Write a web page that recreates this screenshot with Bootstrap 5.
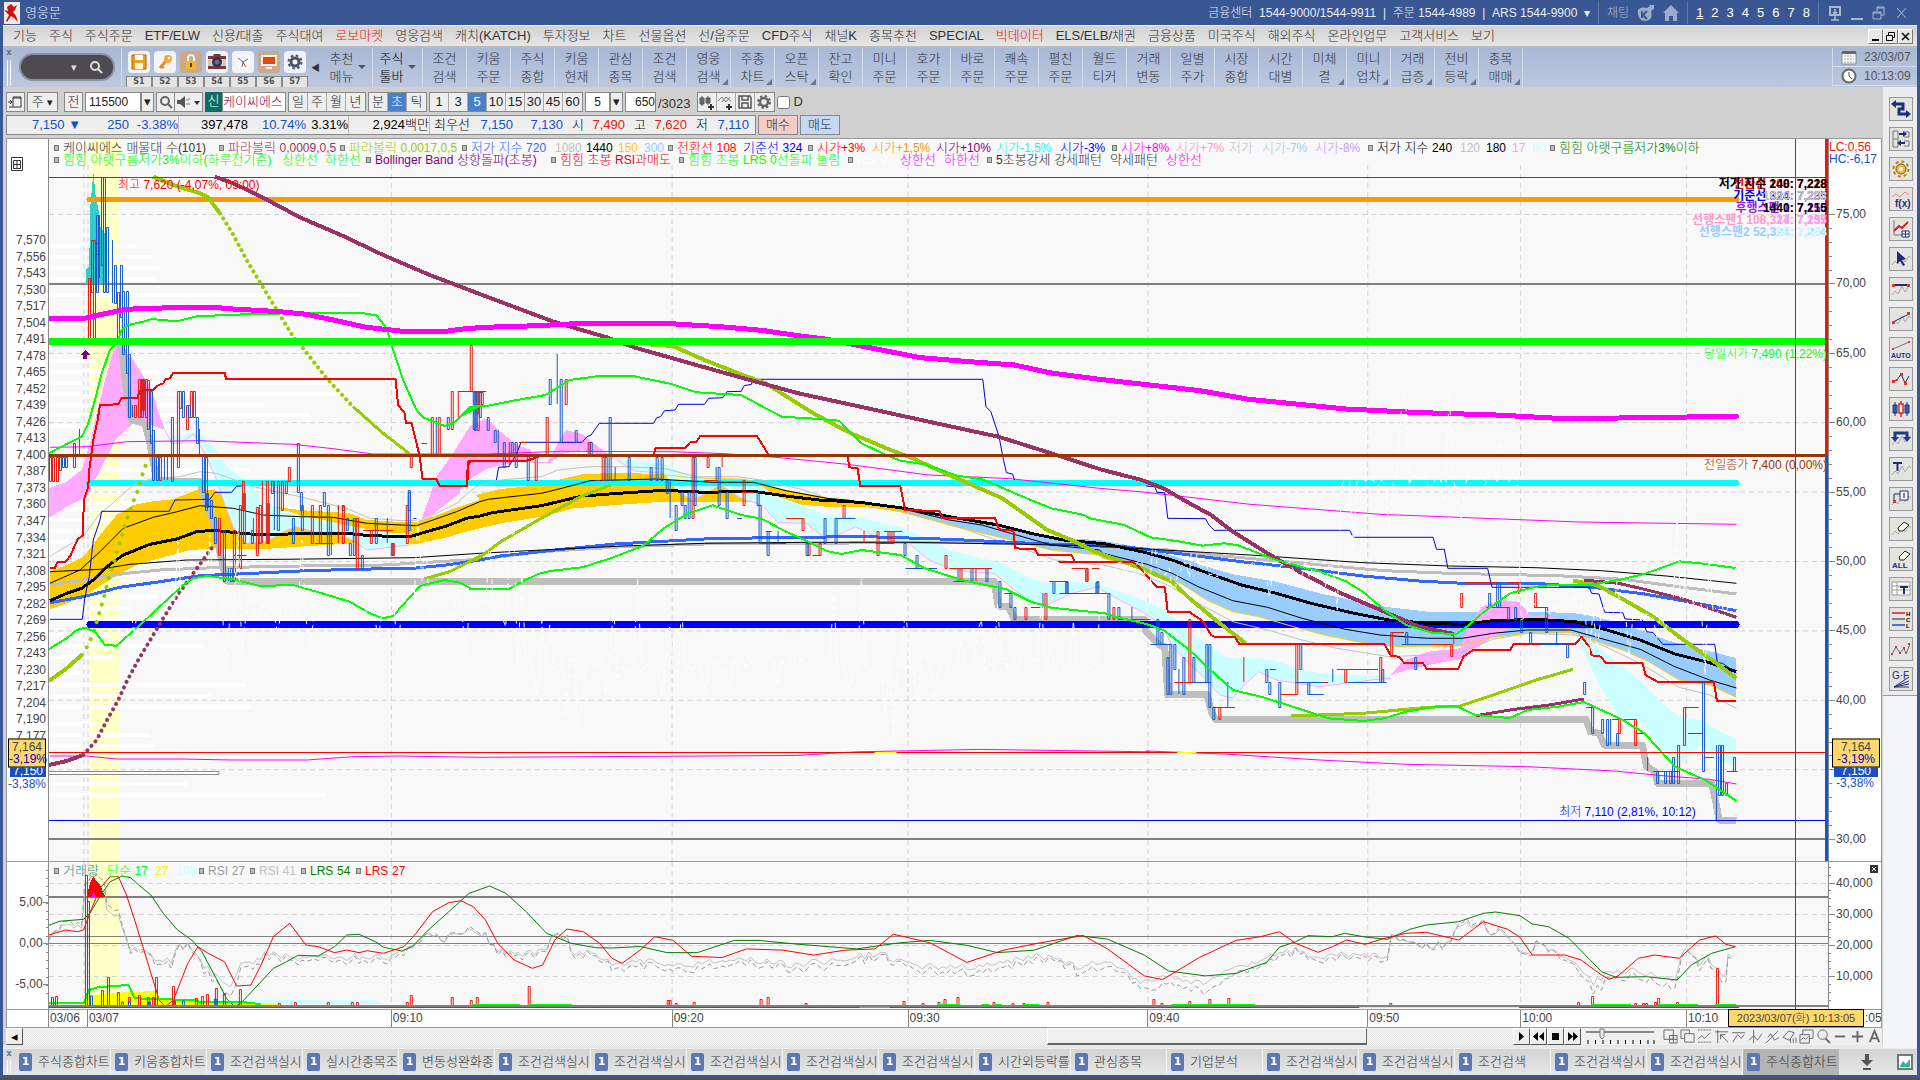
<!DOCTYPE html>
<html lang="ko">
<head>
<meta charset="utf-8">
<meta name="viewport" content="width=device-width, initial-scale=1">
<title>영웅문</title>
<link href="https://cdn.jsdelivr.net/npm/bootstrap@5.3.0/dist/css/bootstrap.min.css" rel="stylesheet">
<style>
:root{--ko:"Liberation Sans","Noto Sans CJK KR",sans-serif}
body{background:#3a5793;font:300 13px/16px var(--ko);color:#333;overflow:hidden}
button,input,select{font:inherit;color:inherit;border-radius:0;margin:0}
a{color:inherit;text-decoration:none}
svg{display:block;flex:none}
.shell{height:100vh;padding:0 3px 3px;border-bottom:2px solid #57513f}
.titlebar{height:25px;color:#e6ebf5;padding-left:1px}
.titlebar .sep{width:1px;height:23px;background:#5f78ab}
.phone{font-size:12px}
.dim{color:#a9b7d6}
.menubar{height:23px;background:linear-gradient(#d2d2d2,#e6e6e6);border-bottom:2px solid #bbb;border-top:1px solid #eee;gap:12px;padding-left:10px;font-size:13px}
.menubar a.hot{color:#e8180c}
.winbtn{width:15px;height:15px;padding:0;border:1px solid #777;border-top-color:#fff;border-left-color:#fff;background:#e8e8e4}
.ribbon{height:39px;background:linear-gradient(#a8b8d6,#bcc8de)}
.rcell{width:44px;border:0;border-right:1px solid #d4dcea;background:none;padding:0;line-height:18px;font-size:13px;position:relative;text-align:center}
.rcell.wide{width:50px;padding-right:12px}
.rcell.fold::after{content:"";position:absolute;right:2px;bottom:2px;border:3px solid transparent;border-right-color:#6a7283;border-bottom-color:#6a7283}
.rcell.wide::after{content:"";position:absolute;right:6px;top:17px;border:4px solid transparent;border-top-color:#555}
.finder{width:96px;height:28px;border-radius:14px;background:#4d4a50;border:2px solid #8a8f9c;color:#ddd;padding:0 10px 0 4px;margin:5px 6px 0 4px}
.finder input{width:46px;border:0;background:none;min-width:0}
.quickbar{border-left:1px solid #d4dcea;padding:3px 0 0 4px}
.quick{width:26px;text-align:center}
.quick button{width:22px;height:22px;border:0;border-radius:4px;padding:2px;background:#f2f3f5}
.quick button.tan{background:#cda98c}
.quick span{display:block;height:12px;font:bold 8px/9px "DejaVu Sans",sans-serif;border:1px solid #888;background:#e4e4e4;color:#555;margin-top:1px}
.fold-arrow{width:15px;font-size:9px;text-align:center}
.grip{width:12px}
.grip i{display:block;width:4px;height:26px;border:1px solid #fff;border-width:0 1px;margin:3px auto 0}
.grip em{display:block;font:bold 9px/9px var(--ko);color:#667;text-align:center}
.grip.low i{height:13px;margin-top:2px}
.stamp{width:85px;border-left:1px solid #d4dcea;color:#555;font-size:12px}
.stamp div{height:19px;border-bottom:1px solid #d4dcea;padding-left:8px;gap:7px}
.work{background:#d0d0d0;min-width:0;padding:5px 1px 0 3px;width:0}
.ctl{height:20px;gap:2px}
.bx{height:20px;border:1px solid #888;background:#eee;padding:0;text-align:center;color:#222}
.bx.w19{width:19px}
.grp{border:1px solid #888;height:20px}
.grp button{width:19px;border:0;border-right:1px solid #aaa;background:#eee;padding:0;color:#222}
.grp button:last-child{border-right:0}
.grp button.on{background:#4a80c8;color:#fff}
.bx.inp{background:#fff;text-align:left;padding-left:3px;font-size:12px}
.newtag{background:#0c6e62;color:#fff;width:17px;height:20px;text-align:center;line-height:18px}
.stk{width:64px;height:20px;line-height:17px;color:#8a0046;background:#fff;border:1px solid #888}
.quote{height:20px;margin-top:3px;gap:2px}
.qbox{width:750px;height:20px;border:1px solid #888;background:#eee;color:#000;text-align:right;line-height:18px}
.qbox .vs{border-right:1px solid #bbb}
.buy{width:40px;background:#f4cdc8}.sell{width:40px;background:#c3daf2}
.blu{color:#1450c8}.red{color:#e8180c}
.chartbox{display:grid;grid-template-columns:42px minmax(0,1fr) 53px;grid-template-rows:minmax(0,1fr) 148px 17px;border:1px solid #999;background:#fff;margin-top:3px;font-size:12px}
.axis,.plot{position:relative;min-width:0;min-height:0;border-bottom:1px solid #999}
.axis.l{border-right:1px solid #888}.axis.r{border-left:1px solid #888}
.plot{background:#f8f8f8}
.plot>svg{position:absolute;inset:0;width:100%;height:100%}
.axis span,.tm span,.pin{position:absolute;white-space:nowrap;line-height:14px}
.axis,.tm{color:#444}
.axis span{transform:translateY(-50%)}
.axis.l span{right:2px}.axis.r span{left:7px}
.axis i{position:absolute;height:1px;background:#888}
.axis.l i{right:0}.axis.r i{left:0}
.pin{transform:translateY(-50%)}
.lgd{position:absolute;left:5px;line-height:13px;white-space:nowrap;font-size:13px}
.lgd span{flex:none;white-space:pre}
.lgd em,.pin em{font-style:normal;font-size:12px}
.lgd .sq::before{content:"";display:inline-block;width:5px;height:6px;border:1px solid #777;background:#bbb;margin-right:4px;vertical-align:1px}
.lgd .first{border:1px solid #bbb;margin-top:-1px}
.axis .ybox{border:1px solid #000;background:#ffd86b;width:38px;text-align:center;line-height:12px;padding:1px 0 2px;z-index:2;right:4px}
.axis .ybox em{display:block;color:#00c;font-style:normal}
.axis.r .ybox{left:3px;width:48px}
.axis .bbox{background:#1450c8;color:#fff;width:36px;text-align:center;line-height:12px;right:4px}
.axis.r .bbox{left:5px;width:44px}
.tm{position:relative;min-width:0;background:#fff}
.tm span{border-left:1px solid #888;padding-left:1px;height:17px;line-height:16px}
.tm .datebox{background:#ffd86b;border:1px solid #000;height:18px;width:136px;text-align:center;top:-1px;padding:0;font-size:11px}
.scroller{height:17px;background:#efefef;flex:none}
.track{background:repeating-conic-gradient(#e4e4e4 0 25%,#f8f8f8 0 50%) 0 0/2px 2px}
.thumb{background:#efefef;border:1px solid #fff;border-right:1px solid #666;border-bottom:2px solid #666;width:320px;margin-right:146px}
.sq16{width:17px;height:17px;border:1px solid #fff;border-right-color:#555;border-bottom-color:#555;background:#eee;padding:0;line-height:12px;color:#000}
.sicon{gap:2px;padding-left:4px}
.ledge{height:3px;background:#e8e8e8;margin:0 -1px 0 -3px;flex:none}
.dock{width:34px;background:#f3f5f9}
.dock>div{background:#ececec;padding:10px 0 4px 6px;gap:6px;border-bottom:1px solid #999}
.dock button{width:24px;height:24px;border:1px solid #999;background:#e3e3e0;padding:1px}
.tabs{height:27px;background:linear-gradient(#d4d4d4,#e6e6e6);border-top:1px solid #eee}
.tabs a{width:96px;border-right:1px solid #f4f4f4;padding-left:4px;gap:6px;overflow:hidden;white-space:nowrap}
.tabs a.on{background:#b4b4b4;border:0}
.tabs b{width:13px;height:18px;border-radius:2px;background:#5a78b4;color:#fff;font:bold 11px/18px "DejaVu Sans",sans-serif;text-align:center;flex:none}
</style>
<script src="https://cdn.jsdelivr.net/npm/bootstrap@5.3.0/dist/js/bootstrap.bundle.min.js"></script>
</head>
<body>
<div class="shell d-flex flex-column">
 <header class="titlebar d-flex align-items-center">
  <svg width="17" height="24" viewBox="0 0 17 24"><path d="M0 1h16v22H0z" fill="#eceae6"/><path d="M7 3l3 3 3-2-2 5-2 2 3 4 2 6-4-4-3-2-4 6-1-1 3-6-3-3-2-2 4 1-1-4z" fill="#d01010"/></svg>
  <span class="ms-1">영웅문</span>
  <span class="ms-auto phone">금융센터&nbsp; 1544-9000/1544-9911 &nbsp;|&nbsp; 주문 1544-4989 &nbsp;|&nbsp; ARS 1544-9900 &nbsp;▾</span>
  <span class="sep mx-2"></span><span class="dim phone">채팅</span>
  <svg class="ms-2" width="18" height="18" viewBox="0 0 18 18"><path d="M1 6c2-3 6-3 9-2l3-2-1-1h5v5l-1-1-2 3c2 5-1 9-6 9S0 12 1 6z" fill="#9caccf"/><path d="M5 7v7M10 7l-4 4 4 4" stroke="#3a5793" stroke-width="2" fill="none"/></svg>
  <svg class="ms-2" width="16" height="18" viewBox="0 0 16 18"><path d="M8 1l8 8h-2v8h-4v-5H6v5H2V9H0z" fill="#9caccf"/></svg>
  <span class="sep mx-2"></span>
  <nav class="d-flex gap-2 text-white"><a href="#"><u>1</u></a><a href="#">2</a><a href="#">3</a><a href="#">4</a><a href="#">5</a><a href="#">6</a><a href="#">7</a><a href="#">8</a></nav>
  <span class="sep mx-2"></span>
  <svg width="90" height="18" viewBox="0 0 90 18" fill="none" stroke="#a9b7d6"><path d="M3 3h10v8H3z" stroke-width="2"/><path d="M8 5v5l-2-2m2 2l2-2M8 12v4M4 16h8" stroke-width="1.5"/><path d="M24 15h12" stroke-width="2"/><path d="M46 8h8v7h-8zM50 7V3h7v8h-3M46 9h8M50 4h7"/><path d="M70 4l9 10M79 4l-9 10"/></svg>
 </header>
 <nav class="menubar d-flex align-items-center" id="menu"></nav>
 <div class="ribbon d-flex">
  <div class="grip"><em>x</em><i></i></div>
  <div class="finder d-flex align-items-center"><input aria-label="화면 검색"><small>▾</small><svg class="ms-auto" width="14" height="14" viewBox="0 0 14 14" fill="none" stroke="#ddd" stroke-width="2"><circle cx="6" cy="6" r="4"/><path d="M9 9l4 4"/></svg></div>
  <div class="d-flex quickbar" id="quick"></div>
  <span class="fold-arrow align-self-center">◀</span>
  <div class="d-flex" id="ribbon"></div>
  <div class="stamp ms-auto">
   <div class="d-flex align-items-center"><svg width="16" height="16" viewBox="0 0 16 16"><path d="M1 3h14v12H1z" fill="#fff" stroke="#888"/><path d="M1 2h14v3H1z" fill="#666"/><path d="M3 7h10M3 10h10M3 13h10" stroke="#999" stroke-dasharray="2 1"/></svg>23/03/07</div>
   <div class="d-flex align-items-center"><svg width="16" height="16" viewBox="0 0 16 16"><circle cx="8" cy="8" r="6.5" fill="#fff" stroke="#666" stroke-width="2"/><path d="M8 4v4l3 3" fill="none" stroke="#555"/></svg>10:13:09</div>
  </div>
 </div>
 <div class="d-flex flex-grow-1" style="min-height:0">
  <main class="work d-flex flex-column flex-grow-1">
   <div class="ctl d-flex">
    <button class="bx w19" aria-label="패널"><svg width="17" height="18" viewBox="0 0 17 18" fill="none" stroke="#333"><path d="M6 4h8v10H6zM2 14h4M1 9h4M3 7l2 2-2 2M6 5h8"/></svg></button>
    <button class="bx" style="width:31px">주 <small>▾</small></button>
    <button class="bx w19 ms-1">전</button>
    <div class="d-flex"><input class="bx inp" style="width:56px" value="115500" aria-label="종목코드"><button class="bx" style="width:13px">▾</button></div>
    <button class="bx w19" aria-label="찾기"><svg width="17" height="18" viewBox="0 0 17 18" fill="none" stroke="#666" stroke-width="2"><circle cx="8" cy="8" r="4"/><path d="M11 11l4 4"/></svg></button>
    <button class="bx" style="width:29px;margin-left:-3px" aria-label="소리"><svg width="27" height="18" viewBox="0 0 27 18"><path d="M2 7h3l5-4v12l-5-4H2z" fill="#555"/><path d="M12 6v2M14 5v2M12 10v2M14 10v2" stroke="#777"/><path d="M19 8h6l-3 4z" fill="#333"/></svg></button>
    <div class="d-flex"><span class="newtag">신</span><span class="stk">케이씨에스</span></div>
    <div class="grp d-flex"><button>일</button><button>주</button><button>월</button><button>년</button></div>
    <div class="grp d-flex"><button>분</button><button class="on">초</button><button>틱</button></div>
    <div class="grp d-flex"><button>1</button><button>3</button><button class="on">5</button><button>10</button><button>15</button><button>30</button><button>45</button><button>60</button></div>
    <div class="d-flex"><input class="bx inp text-center p-0" style="width:25px" value="5" aria-label="주기"><button class="bx" style="width:13px">▾</button></div>
    <input class="bx inp text-end" style="width:31px" value="650" aria-label="봉 수"><span class="pt-1 me-1">/3023</span>
    <div class="grp d-flex"><button aria-label="봉 추가"><svg width="18" height="18" viewBox="0 0 18 18"><path d="M2 5h4v6H2zM4 3v10M8 5h4v5H8zM10 3v9" stroke="#555" fill="#777"/><path d="M13 11v6M10 14h6" stroke="#333" stroke-width="2"/></svg></button><button aria-label="지표 추가"><svg width="18" height="18" viewBox="0 0 18 18" fill="none" stroke="#777"><path d="M1 8l4-4 4 5 4-5M5 9l4-5 5 4"/><path d="M12 11v6M9 14h6" stroke="#333" stroke-width="2"/></svg></button><button aria-label="저장"><svg width="18" height="18" viewBox="0 0 18 18" fill="none" stroke="#555" stroke-width="1.5"><path d="M3 3h11l1 2v10H3zM6 3v4h6V3M6 15v-5h6v5"/></svg></button><button aria-label="설정"><svg width="18" height="18" viewBox="0 0 18 18" fill="none" stroke="#666"><circle cx="9" cy="9" r="4" stroke-width="2.5"/><circle cx="9" cy="9" r="6" stroke-width="2" stroke-dasharray="2.4 2.3"/></svg></button></div>
    <label class="d-flex align-items-center"><input type="checkbox" style="width:13px;height:13px" class="me-1">D</label>
   </div>
   <div class="quote d-flex">
    <div class="qbox d-flex" id="qbox"></div>
    <button class="bx buy">매수</button>
    <button class="bx sell">매도</button>
   </div>
   <section class="chartbox flex-grow-1">
    <div class="axis l" id="axL"></div>
    <div class="plot"><svg id="main" viewBox="49 139 1780 722" preserveAspectRatio="none" shape-rendering="crispEdges"></svg>
     <div class="lgd d-flex" id="lg1" style="top:2px"></div><div class="lgd d-flex" id="lg2" style="top:14px"></div><div id="pins"></div></div>
    <div class="axis r" id="axR"></div>
    <div class="axis l" id="axL2"></div>
    <div class="plot"><svg id="sub" viewBox="49 862 1780 147" preserveAspectRatio="none" shape-rendering="crispEdges"></svg><div class="lgd d-flex" id="lg3" style="top:2px"></div></div>
    <div class="axis r" id="axR2"></div>
    <div></div><div class="tm" id="tm"></div><div></div>
   </section>
   <div class="scroller d-flex">
    <button class="sq16">◂</button><div class="track flex-grow-1 d-flex justify-content-end"><div class="thumb"></div></div>
    <button class="sq16" aria-label="재생"><svg width="15" height="13" viewBox="0 0 15 13"><path d="M5 2v9l5-4.500z"/></svg></button><button class="sq16" aria-label="뒤로"><svg width="15" height="13" viewBox="0 0 15 13"><path d="M7 2v9L2 6.500zM13 2v9L8 6.500z"/></svg></button><button class="sq16" aria-label="정지"><svg width="15" height="13" viewBox="0 0 15 13"><path d="M4 3h7v7H4z"/></svg></button><button class="sq16" aria-label="앞으로"><svg width="15" height="13" viewBox="0 0 15 13"><path d="M3 2v9l5-4.500zM8 2v9l5-4.500z"/></svg></button>
    <svg class="ms-1" width="74" height="17" viewBox="0 0 74 17"><path d="M1 4h68" stroke="#888" stroke-width="2"/><path d="M3 12v4M10.500 12v4M18 12v4M25.500 12v4M33 12v4M40.500 12v4M48 12v4M55.500 12v4M63 12v4M69 12v4" stroke="#000"/><path d="M15 1h4v8l-2 2-2-2z" fill="#eee" stroke="#777"/></svg>
    <div class="d-flex sicon align-items-center" id="sicon"></div>
   </div>
   <div class="ledge"></div>
  </main>
  <aside class="dock"><div class="d-flex flex-column" id="dock"></div></aside>
 </div>
 <nav class="tabs d-flex" id="tabs"></nav>
</div>
<script>
const $=id=>document.getElementById(id);
const hot={'로보마켓':1,'빅데이터':1};
$('menu').innerHTML='기능 주식 주식주문 ETF/ELW 신용/대출 주식대여 로보마켓 영웅검색 캐치(KATCH) 투자정보 차트 선물옵션 선/옵주문 CFD주식 채널K 종목추천 SPECIAL 빅데이터 ELS/ELB/채권 금융상품 미국주식 해외주식 온라인업무 고객서비스 보기'.split(' ').map(t=>`<a href="#"${hot[t]?' class="hot"':''}>${t}</a>`).join('')+
 '<div class="ms-auto d-flex me-1"><button class="winbtn" aria-label="최소화"><svg width="13" height="13"><path d="M3 10h7" stroke="#000" stroke-width="2"/></svg></button><button class="winbtn" aria-label="복원"><svg width="13" height="13" fill="none" stroke="#000"><path d="M2.500 5.500h6v5h-6zM4.500 5V2.500h6v5H9"/></svg></button><button class="winbtn" aria-label="닫기"><svg width="13" height="13" stroke="#000" stroke-width="1.500"><path d="M3 3l7 7M10 3l-7 7"/></svg></button></div>';
const q=['<path d="M2 2h14v14H2z" fill="#e8a020" stroke="#a66a00"/><path d="M5 2h8v5H5z" fill="#fff"/><path d="M5 10h8v6H5z" fill="#fff3d0"/>',
'<path d="M4 15l6-7" stroke="#e8891c" stroke-width="3"/><circle cx="12" cy="6" r="4" fill="#f4a828"/><circle cx="13" cy="5" r="1.300" fill="#fff"/><path d="M5 13l3 2" stroke="#e8891c" stroke-width="2"/>',
'<path d="M6 8V5a3 3 0 016 0v3" fill="none" stroke="#eee" stroke-width="2"/><path d="M4 8h10v8H4z" fill="#f0b828"/><path d="M9 10v4" stroke="#444" stroke-width="2"/>',
'<path d="M0 3h5l1-2h6l1 2h5v13H0z" fill="#7a3a3a"/><path d="M0 6h18v7H0z" fill="#d8c8c0"/><circle cx="9" cy="9" r="5" fill="#334"/><circle cx="9" cy="9" r="2.500" fill="#66a"/>',
'<circle cx="9" cy="9" r="8" fill="#f6f8fa"/><path d="M4 5l5 4 5-3M9 9l-1 5" stroke="#667" fill="none"/><path d="M9 9l3 5" stroke="#c33"/>',
'<path d="M1 2h16v11H1z" fill="#eee"/><path d="M3 4h12v7H3z" fill="#e04818"/><path d="M6 15h6" stroke="#eee" stroke-width="2"/>',
'<circle cx="9" cy="9" r="4" fill="none" stroke="#4a5568" stroke-width="3"/><circle cx="9" cy="9" r="6.500" fill="none" stroke="#4a5568" stroke-width="2" stroke-dasharray="2.600 2.500"/>'];
$('quick').innerHTML=q.map((s,i)=>`<div class="quick"><button class="${i==2||i==5?'tan':''}" aria-label="S${i+1}"><svg width="18" height="18">${s}</svg></button><span>S${i+1}</span></div>`).join('');
$('ribbon').innerHTML='추천메뉴w 주식툴바w 조건검색 키움주문 주식종합 키움현재 관심종목 조건검색 영웅검색f 주종차트f 오픈스탁f 잔고확인 미니주문 호가주문 바로주문 쾌속주문 펼친주문 월드티커 거래변동 일별주가 시장종합 시간대별 미체결f 미니업차f 거래급증f 전비등락f 종목매매f'.split(' ').map((t,i)=>{
 const k=/[wf]$/.test(t)?t.slice(-1):'';if(k)t=t.slice(0,-1);
 return `<button class="rcell ${k=='w'?'wide':k=='f'?'fold':''} ${i==1?'text-black':''}">${t.slice(0,2)}<br>${t.slice(2)}</button>`}).join('');
$('qbox').innerHTML=[[74,'7,150 ▼','blu'],[48,'250','blu'],[50,'-3.38% ','blu vs'],[69,'397,478'],[58,'10.74%','blu'],[43,'3.31%','vs'],[81,'2,924백만','vs'],[40,'최우선'],[43,'7,150','blu'],[50,'7,130','blu'],[21,'시'],[41,'7,490','red'],[21,'고'],[41,'7,620','red'],[21,'저'],[41,'7,110','blu']].map(a=>`<span class="${a[2]||''}" style="width:${a[0]}px">${a[1]}</span>`).join('');
const wave='<path d="M1 16l3-4 3 3 4-8 3 6 4-6 2 2" fill="none" stroke="#aaa"/>';
const dk=['<path d="M2 5h10v5H8v5h10" fill="none" stroke="#1c2e78" stroke-width="3"/><path d="M5 1v8L0 5zM15 11v8l5-4z" fill="#1c2e78"/>',
'<path d="M2 2h5v16H2zM2 10h5M13 3h5v5h-5M13 12h5v5h-5" fill="none" stroke="#777"/><path d="M8 5h6M14 14H8" stroke="#1c2e78" stroke-width="2"/><path d="M12 2l4 3-4 3zM10 11l-4 3 4 3z" fill="#1c2e78"/>',
'<circle cx="10" cy="10" r="5" fill="#f4b840" stroke="#7a5410"/><circle cx="10" cy="10" r="7.500" fill="none" stroke="#b8801c" stroke-width="2" stroke-dasharray="3 2.900"/><circle cx="10" cy="10" r="2" fill="#fff"/>',
'<path d="M1 8l4-3 4 3 5-5 4 3" fill="none" stroke="#d88"/><text x="4" y="18" font-size="10" font-weight="bold" fill="#1c2e78">f(x)</text>',
'<path d="M3 1v15h14" fill="none" stroke="#777"/><path d="M3 12l5-5 3 2 6-6" fill="none" stroke="#c22" stroke-width="2"/><path d="M11 12h7v6h-7zM14.500 12v6M11 15h7" fill="#fff" stroke="#1c2e78"/>',
wave+'<path d="M6 2l9 8-4 1 3 5-2 1-3-5-3 3z" fill="#1c2e78"/>',
wave+'<path d="M2 6h16" stroke="#1c2e78" stroke-width="2"/><path d="M1 5h3v3H1zM16 5h3v3h-3z" fill="#d33"/>',
wave+'<path d="M2 13L18 5" stroke="#1c2e78"/><path d="M1 12h3v3H1zM16 3h3v3h-3z" fill="#d33"/>',
'<path d="M2 10L18 3" stroke="#777"/><path d="M1 9h2v2H1zM17 2h2v2h-2z" fill="#d33"/><text x="0" y="19" font-size="7" font-weight="bold" fill="#1c2e78">AUTO</text>',
'<path d="M2 12l4-1 4-6 4 9 4-7" fill="none" stroke="#1c2e78"/><path d="M1 11h3v3H1zM5 10h2v2H5zM9 4h3v3H9zM13 13h3v3h-3z" fill="#d33"/>',
'<path d="M2 6h4v8H2zM4 3v14M14 6h4v8h-4zM16 3v14" fill="#5a78c0" stroke="#1c2e78"/><path d="M8 5h4v9H8zM10 2v3M10 14v4" fill="#fff" stroke="#d22" stroke-width="1.500"/>',
wave+'<path d="M4 10V4h12v6" fill="none" stroke="#1c3c88" stroke-width="3"/><path d="M0 8h8l-4 5zM12 8h8l-4 5z" fill="#1c3c88"/>',
wave+'<path d="M2 3h9v2H2zM5.500 3h2v9h-2z" fill="#1c2e78"/>',
wave+'<path d="M3 12V5h6" fill="none" stroke="#1c2e78"/><path d="M9 2h8v9H9z" fill="#fff" stroke="#1c2e78"/><path d="M13 4v5" stroke="#000"/><path d="M2 11h3v3H2z" fill="#d33"/>',
wave+'<path d="M7 9l6-6 5 3-6 6H8z" fill="#fdf8ea" stroke="#222"/>',
'<path d="M8 8l6-6 5 3-6 6H9z" fill="#fdf8ea" stroke="#222"/><text x="1" y="19" font-size="8" font-weight="bold" fill="#1c2e78">ALL</text>',
'<path d="M1 3h18v13H1zM1 7h18M1 11h18M6 3v13" fill="#fff" stroke="#999"/><path d="M9 7h8v2H9zM12 7h2v8h-2z" fill="#1c2e78"/>',
'<path d="M1 4h13" stroke="#c22" stroke-width="1.500"/><path d="M1 10h13" stroke="#222"/><path d="M1 16h13" stroke="#15c" stroke-width="1.500"/><text x="15" y="7" font-size="6" font-weight="bold">H</text><text x="15" y="13" font-size="6" font-weight="bold">C</text><text x="15" y="19" font-size="6" font-weight="bold">L</text>',
'<path d="M1 15l4-7 4 6 4-5 2 6 4-10" fill="none" stroke="#668"/><path d="M0 14h2v2H0zM4 7h2v2H4zM8 13h2v2H8zM12 8h2v2h-2zM17 4h2v2h-2z" fill="#d33"/>',
'<text x="1" y="10" font-size="10" fill="#1c2e78">G·F</text><path d="M3 18L18 8M3 18L18 12M3 18h15M3 18L18 15" stroke="#1c2e78"/>'];
$('dock').innerHTML=dk.map((s,i)=>`<button aria-label="그리기 도구 ${i+1}"><svg width="20" height="20">${s}</svg></button>`).join('');
const si=['<path d="M1 1h10v10H1z"/><path d="M7 7h8v8H7zM11 7v8M7 11h8"/>','<path d="M1 1h9v9H1z"/><path d="M5 5h10v9H5z" fill="#eee"/>','<path d="M1 1h14M1 14h14" stroke-dasharray="2 1"/><path d="M1 11l4-4 3 3 6-6"/>','<path d="M1 3h14M4 1v14M7 6l8 8M7 6v5M7 6h5"/>','<path d="M1 4h14M2 14l5-8 4 4 3-4"/>','<path d="M6 1v14M1 12l5-5 4 5 5-7"/>','<path d="M1 15L14 2M3 9l3-4 4 7 5-3"/>','<path d="M1 9l6-7 6 2-5 8z"/><path d="M9 10v5M12 10v5M15 9v6"/>','<path d="M4 1h11v9H4z"/><path d="M1 6h10v9H1z" fill="#eee"/><path d="M2 12l3-3 2 2 3-3"/>','<circle cx="7" cy="6" r="5"/><path d="M10 10l5 5" stroke-width="2"/>','<path d="M2 8h11" stroke-width="2"/>','<path d="M2 8h12M8 2v12" stroke-width="2"/>','<path d="M3 14L8 2l5 12M5 10h6" stroke-width="2"/>'];
$('sicon').innerHTML=si.map(s=>`<svg width="15" height="15" viewBox="0 0 16 16" fill="none" stroke="#666">${s}</svg>`).join('');
$('tabs').innerHTML='<div class="grip low"><em>x</em><i></i></div>'+'주식종합차트 키움종합차트 조건검색실시 실시간종목조 변동성완화종 조건검색실시 조건검색실시 조건검색실시 조건검색실시 조건검색실시 시간외등락률 관심종목 기업분석 조건검색실시 조건검색실시 조건검색 조건검색실시 조건검색실시 주식종합차트'.split(' ').map((t,i)=>`<a href="#" class="d-flex align-items-center ${i==18?'on':''}"><b>1</b>${t}</a>`).join('')+
'<svg class="ms-auto me-4 align-self-center" width="12" height="18"><path d="M4 1h4v6h4l-6 6-6-6h4zM2 15h8v2H2z" fill="#555"/></svg><svg class="me-1 align-self-center" width="16" height="16"><path d="M1 1h14v14H1z" fill="#fff" stroke="#777" stroke-width="2"/><path d="M3 12l3-5 3 3 4-5v8H3z" fill="#2cb5a4"/></svg>';

/* axes */
const py=(y,t,h)=>((y-t)/h*100).toFixed(2)+'%', px=x=>((x-49)/1780*100).toFixed(2)+'%';
const lab=(y,t,h,s)=>`<span style="top:${py(y,t,h)}">${s}</span>`;
let h='<svg class="ms-1" style="position:absolute;left:0;top:18px" width="12" height="14"><path d="M.5.5h11v13H.5zM2.500 3.500h7v8h-7zM2.500 7.500h7M6 3.500v8" fill="#fff" stroke="#333"/></svg>';
[7570,7556,7543,7530,7517,7504,7491,7478,7465,7452,7439,7426,7413,7400,7387,7373,7360,7347,7334,7321,7308,7295,7282,7269,7256,7243,7230,7217,7204,7190,7177].forEach((v,i)=>h+=lab(240+i*16.53,139,722,'7,'+(v-7000)));
h+=`<span class="blu" style="top:${py(784,139,722)}">-3,38%</span>`;
h+=`<span class="bbox" style="top:${py(771,139,722)}">7,150</span><span class="ybox" style="top:${py(753,139,722)}">7,164<em>-3,19%</em></span>`;
$('axL').innerHTML=h;
h='<span class="red" style="top:8px;left:0">LC:0,56</span><span class="blu" style="top:20px;left:0">HC:-6,17</span>';
for(let i=0;i<10;i++){h+=lab(214+i*69.4,139,722,(75-i*5)+',00');for(let k=0;k<5&&i*5+k<46;k++)h+=`<i style="top:${py(214+i*69.4+k*13.9,139,722)};width:${k?3:6}px"></i>`}
h+=`<span class="bbox" style="top:${py(771,139,722)}">7,150</span><span class="blu" style="top:${py(783,139,722)}">-3,38%</span><span class="ybox" style="top:${py(753,139,722)}">7,164<em>-3,19%</em></span>`;
$('axR').innerHTML=h;
h='';[[902,'5,00'],[943,'0,00'],[984,'-5,00']].forEach(a=>h+=lab(a[0],862,147,a[1]+'&nbsp;')+`<i style="top:${py(a[0],862,147)};width:5px"></i>`);
for(let y=870;y<1000;y+=8.2)h+=`<i style="top:${py(y,862,147)};width:2px"></i>`;
$('axL2').innerHTML=h;
h='<svg style="position:absolute;right:3px;top:3px" width="8" height="8"><path d="M0 0h8v8H0z" fill="#333"/><path d="M2 2l4 4M6 2L2 6" stroke="#fff"/></svg>';
[[883,'40,000'],[914,'30,000'],[945,'20,000'],[976,'10,000']].forEach(a=>h+=lab(a[0],862,147,a[1])+`<i style="top:${py(a[0],862,147)};width:6px"></i>`);
for(let y=867;y<1005;y+=7.8)h+=`<i style="top:${py(y,862,147)};width:2px"></i>`;
$('axR2').innerHTML=h;
$('tm').innerHTML=[[48,'<b>03/06</b>'],[87,'<b>03/07</b>'],[391,'09:10'],[672,'09:20'],[908,'09:30'],[1148,'09:40'],[1368,'09:50'],[1521,'10:00'],[1687,'10:10']].map(a=>`<span style="left:${px(a[0])}">${a[1]}</span>`).join('')+`<span class="border-0" style="left:${px(1865)}">:05</span><span class="datebox" style="left:${px(1729)}">2023/03/07(화) 10:13:05</span>`;

/* legends: [advance, colour, text, starts a series] */
const lat=s=>s.replace(/[A-Za-z0-9,.+%()\-]+/g,'<em>$&</em>');
const lg=(id,a)=>$(id).innerHTML=a.map(r=>`<span class="${r[3]?'sq':''}" style="width:${r[0]}px;color:${r[1]}">${lat(r[2])}</span>`).join('');
lg('lg1',[[165,'#333','케이씨에스 매물대 수(101)',1],[121,'#993366','파라볼릭 0,0009,0,5',1],[122,'#99cc00','파라볼릭 0,0017,0,5',1],[93,'#3366ff','저가 지수 720',1],[31,'#c0c0c0','1080'],[32,'#000','1440'],[26,'#ffcc00','150'],[24,'#99ccff','300'],[75,'#f00','전환선 108',1],[65,'#00f','기준선 324'],[64,'#f00','시가+3%',1],[64,'#ff9900','시가+1,5%'],[60,'#800080','시가+10%'],[64,'#0ff','시가-1,5%'],[52,'#00f','시가-3%'],[64,'#f0f','시가+8%',1],[53,'#f9c','시가+7%'],[33,'#c0c0c0','저가'],[53,'#99ccff','시가-7%'],[53,'#c9f','시가-8%'],[92,'#000','저가 지수 240',1],[26,'#c0c0c0','120'],[26,'#000','180'],[20,'#f9f','17'],[18,'#cff','60'],[160,'green','힘힘 아랫구름저가3%이하',1]]);
lg('lg2',[[228,'#0f0','힘힘 아랫구름저가3%이하(하루전기준)',1],[43,'#0f0','상한선'],[41,'#0f0','하한선'],[185,'#800080','Bollinger Band 상향돌파(초봉)',1],[128,'#d8001c','힘힘 초봉 RSI과매도',1],[169,'#0f0','힘힘 초봉 LRS 0선돌파 눌림',1],[52,'#fff','RSI 27',1],[44,'#f0f','상한선'],[43,'#f0f','하한선'],[123,'#333','5초봉강세 강세패턴',1],[56,'#333','약세패턴'],[50,'#f0f','상한선']]);
lg('lg3',[[53,'#2a8c8c','거래량',1],[48,'#0f0','단순 17'],[21,'#ffec00','27'],[23,'#cff','108'],[51,'#999','RSI 27',1],[51,'#c0c0c0','RSI 41',1],[55,'green','LRS 54',1],[60,'#f00','LRS 27',1]]);
const pin=(x,y,c,s,b)=>`<span class="pin ${b?'fw-bold':''}" style="${x>1600?'right:1px':'left:'+px(x)};top:${py(y,139,722)};color:${c}">${s}</span>`;
$('pins').innerHTML=pin(118,185,'#f00','최고 7,620 (-4,07%, 09:00)')+pin(1560,812,'#00f','최저 7,110 (2,81%, 10:12)')+pin(1700,354,'#0f0','당일시가 7,490 (1,22%)')+pin(1700,465,'#993300','전일종가 7,400 (0,00%)')+
pin(1700,184,'#f00','전환선 108: 7,218',1)+pin(1700,184,'#000','저가 지수 240: 7,228',1)+pin(1700,196,'#00f','기준선 324: 7,235',1)+pin(1700,196,'#c0c0c0','1080: 7,298',1)+pin(1700,208,'#9c1be0','후행스팬 1: 7,150',1)+pin(1700,208,'#000','1440: 7,215',1)+pin(1700,220,'#f9c','선행스팬1 108,324: 7,237',1)+pin(1700,220,'#f9f','17: 7,155',1)+pin(1700,232,'#9cf','선행스팬2 52,324: 7,264',1)+pin(1700,232,'#cff','60: 7,163',1);

/* drawing helpers; each block of points has its own origin and scale */
const Z={A:[0,160,3,3],B:[0,500,3,3],C:[460,250,2.45,3],D:[1060,450,2.306,3],E:[0,0,.8167,.8167],F:[0,850,2.45,3],G:[1280,850,2.45,3],H:[640,980,2.45,3],P:[0,0,1,1]};
function pts(s){let z=Z.P,o=[];s.trim().split(/\s+/).forEach(t=>{if(Z[t]){z=Z[t];return}const[x,y]=t.split(',').map(Number);o.push([z[0]+x/z[2],z[1]+y/z[3]])});return o}
const f=o=>o.map(p=>p[0].toFixed(1)+','+p[1].toFixed(1)).join(' ');
const line=(c,w,s,x='')=>`<polyline points="${f(pts(s))}" fill="none" stroke="${c}" stroke-width="${w}" stroke-linejoin="round" ${x}/>`;
const area=(c,s)=>`<polygon points="${f(pts(s))}" fill="${c}"/>`;
const H=(y,c,w,x1=49,x2=1829,x='')=>`<path d="M${x1} ${y}H${x2}" stroke="${c}" stroke-width="${w}" ${x}/>`;
const dash='stroke-dasharray="5 4"', rnd='stroke-linecap="round"', dots='stroke-linecap="round" stroke-dasharray="0.100 6" shape-rendering="auto"';
const VX=[84,88,391.5,672.5,908.5,1148.5,1368.5,1521.5,1687.5];
let m='<path d="M89 139h30v722H89z" fill="#ffffc8"/>';
const prof=[136,152,160,156,360,81,95,180,330,351,264,310,190,250,143,220,300,150,210,380,240,180,158,129,190,110,204,113,85,246,210,251,96,149,155];
let pyv=[245.6,256.6,267.5,278.5,295,333,361,372,383,394,405,415,426,470,492,503,509,520,531,542,553,575,597,608,619,635,646,657,673,685,696,707,724,735,746];
pyv.forEach((y,i)=>m+=`<path d="M49 ${y-2}h${prof[i]-49}v4H49z" fill="#fff"/>`);
m+='<path d="M49 782h137v4H49zM49 793h276v4H49z" fill="#fff"/>';
VX.forEach(x=>m+=`<path d="M${x} 165V861" stroke="#d2d2d2" ${dash}/>`);
for(let i=0;i<10;i++)if(i!=1&&i!=9)m+=H(214.5+i*69.4,'#d2d2d2',1,49,1826,dash);
m+=H(284,'#808080',2)+H(839,'#808080',2);
m+=area('#3cc','A 257,372 257,330 268,320 270,150 278,60 281,40 286,100 298,160 300,200 320,230 320,372');
m+=area('#ffcc00','B 150,215 200,195 250,170 270,145 300,105 350,45 400,15 A 450,1025 520,1018 590,990 640,990 680,1005 B 820,20 900,30 1050,40 1100,60 1190,65 1250,65 1300,50 1350,30 1440,0 C 40,735 100,717 200,705 240,690 300,673 390,668 480,672 560,682 620,685 700,688 760,712 850,733 900,745 1000,760 1090,780 1090,787 1000,772 900,770 740,755 600,755 480,757 380,765 280,775 200,800 100,820 0,850 B 1350,110 1260,130 1200,138 1100,135 1060,130 900,140 780,148 650,145 570,150 480,175 420,190 360,220 300,258 250,290 200,310 150,328');
m+=area('#99ccff','C 1090,775 1200,795 1320,822 1400,850 1480,865 1568,870 D 100,272 200,295 280,325 340,350 400,373 500,395 600,430 700,457 750,470 850,485 920,487 1000,485 1100,485 1190,490 1240,500 1300,525 1360,548 1400,570 1460,592 1520,610 1562,625 1562,742 1500,705 1430,690 1360,635 1300,600 1240,575 1180,548 1080,550 1000,562 920,588 780,590 700,578 620,558 540,530 460,500 400,485 340,450 280,400 200,358 100,325 C 1568,915 1450,900 1350,870 1200,825 1090,790');
m+=area('#ffaaff','A 147,985 200,965 245,930 270,850 290,760 315,660 345,555 360,560 400,600 450,680 470,740 495,810 440,790 400,790 350,835 300,930 260,1010 200,1040 147,1073');
m+=area('#ffaaff','A 1265,1080 1310,950 1360,880 1415,790 C 10,560 25,528 65,505 100,545 140,585 175,600 180,635 215,637 130,637 70,655 40,675 0,720 A 1380,1000 1300,1062');
m+=area('#ffaaff','C 180,635 215,635 260,540 300,552 350,600 380,625 300,600 250,612 220,640 180,640');
m+=area('#ccffff','A 515,830 580,820 610,830 650,870 690,930 750,970 780,1010 820,1040 900,1065 1040,1095 1090,1105 1170,1120 1230,1120 1230,1155 1100,1170 1060,1140 1000,1120 950,1118 890,1100 860,1110 800,1145 740,1150 700,1100 670,1020 650,960 620,890 590,830 515,850');
m+=area('#ccffff','C 385,628 490,637 570,680 620,685 735,705 780,740 840,765 900,797 960,798 1080,830 1150,868 1200,900 1280,925 1330,940 1400,985 1450,1000 1500,997 1568,995 1568,1010 1500,1030 1440,1065 1400,1055 1360,1020 1310,970 1240,965 1200,955 1150,930 1100,880 1020,860 970,830 900,870 850,820 780,818 740,765 690,745 640,705 570,752 530,720 500,670 430,663');
m+=area('#ccffff','D 0,398 80,400 130,420 200,455 250,485 270,510 300,545 350,590 390,625 460,625 500,632 560,660 620,673 720,677 765,680 765,685 720,690 600,710 500,690 460,665 430,700 400,745 370,735 340,690 300,640 260,590 240,530 200,492 110,430 85,410 0,445');
m+=area('#ffaaff','D 765,675 790,635 850,605 925,595 940,540 975,470 1020,450 1060,455 1090,500 1120,495 1150,505 1190,548 1150,530 1100,530 1040,535 1000,560 925,627 850,645 790,665');
m+=area('#ccffff','D 1190,550 1210,560 1250,600 1290,640 1350,705 1400,770 1430,800 1480,810 1520,840 1562,868 1562,950 1520,930 1480,885 1430,945 1390,900 1350,825 1290,795 1240,690');
m+=line('#ffaaff',1,'A 495,810 515,850 545,850 580,820 620,890 650,960 670,1020 700,1100 740,1150 800,1145 860,1110 890,1100 950,1118 1000,1120 1060,1140 1100,1170 1230,1155');
m+=line('#ffaaff',1,'C 385,630 430,663 500,670 530,720 570,752 640,705 690,745 740,765 780,818 850,820 900,870 970,830 1020,860 1100,880 1150,930 1200,955 1240,965 1310,970 1360,1020 1400,1055 1440,1065 1500,1030 1568,1010 D 85,410 110,430 200,492 240,530 260,590 300,640 340,690 370,735 400,745 430,700 460,665 500,690 600,710 720,690 765,685');
m+=line('#bebebe',7,'A 352,560 365,560 380,700 395,780 435,790 450,850 470,962 600,965 B 615,0 640,60 665,180 680,243 1440,243 C 1310,994 1320,1068 1345,1070 1360,1108 1568,1108 D 195,508 200,545 230,585 243,590 250,735 340,733 352,790 360,808 1215,808 1225,845 1245,850 1258,886 1345,886 1355,950 1375,965 1380,1000 1505,1000 1515,1060 1522,1110 1562,1112');
m+=H(482.7,'#0ff',6,89,1737,rnd)+H(624.5,'#00f',7,90,1737,rnd)+H(199.5,'#ff9900',5,89,1738,rnd);
m+=line('#c0c0c0',1,'B 150,168 250,110 300,40 A 320,1045 400,975 450,957 540,950 600,935 650,940 760,980 900,1010 1040,1045 B 1110,55 1210,62 1270,60 1330,30 1380,5 C 0,750 40,710 100,690 200,680 240,660 320,650 400,650 500,655 580,680 680,680 750,692 850,722 900,745 1000,762 1090,788 1200,822 1280,855 1350,885 1400,905 1460,930 1568,945 D 100,345 180,370 250,405 320,460 400,515 480,540 560,570 640,595 760,620 850,615 920,610 1000,568 1080,550 1190,555 1260,590 1340,640 1430,712 1500,735 1562,775');
m+=line('#ffcc00',1,'C 480,672 560,682 620,685 700,688 760,712 850,733 1090,787 1200,825 1350,870 1450,900 1568,915 D 100,325 200,358 280,400 340,450 400,485 460,500 540,530 620,558 700,578 780,590 920,588 1000,562 1080,550 1180,548 1240,575 1300,600 1360,635 1430,690 1500,705 1562,742');
m+=line('#bebebe',3,'B 150,255 250,240 380,220 480,210 640,203 900,198 1150,195 1350,183 1440,178 C 200,905 400,890 600,882 850,880 1200,877 1400,882 1568,890 D 250,300 350,315 480,330 620,347 750,362 900,370 1150,377 1300,388 1440,412 1562,432');
m+=line('#3366ff',3,'B 150,308 250,290 360,262 480,245 600,227 760,220 900,213 1060,208 1240,205 1340,195 1440,180 C 100,918 250,898 380,882 600,867 800,862 1000,860 1200,868 1400,880 1568,888 D 150,290 300,315 420,335 560,355 700,378 830,393 930,400 1120,402 1230,412 1350,432 1450,455 1562,482');
m+=line('#000',1,'B 150,215 300,208 390,193 560,180 850,178 1240,173 1440,160 C 200,900 400,888 600,880 850,877 1100,877 1350,882 1568,888 D 200,297 440,315 700,338 900,348 1100,353 1250,362 1400,378 1562,400');
m+=line('#000',1,'B 150,250 240,210 300,155 370,85 460,52 520,38 600,17 700,25 790,45 900,50 1000,52 1100,70 1250,77 1300,60 1370,35 1440,5 C 70,748 200,730 250,715 320,692 480,687 620,697 720,697 800,722 900,745 950,750 1090,778 1200,810 1280,825 1350,850 1450,885 1568,900 D 100,310 200,342 260,370 320,410 400,452 480,472 560,505 660,538 740,555 850,565 930,565 1000,550 1080,540 1180,540 1240,562 1340,598 1420,650 1500,690 1562,714');
m+=line('#000',3,'B 150,302 200,280 245,265 280,240 320,200 370,165 450,133 530,117 590,95 640,91 750,102 850,103 900,100 1060,102 1110,107 1230,110 1280,95 1340,78 1400,55 1440,48 C 80,788 200,767 300,738 400,729 500,721 600,727 720,724 800,738 880,750 980,757 1090,775 1200,800 1320,825 1400,850 1480,870 1568,880 D 100,280 200,308 260,330 340,368 420,405 500,430 580,460 680,490 760,510 850,520 930,523 1000,512 1100,508 1190,515 1250,535 1340,570 1420,612 1500,638 1562,665');
m+=line('#f0f',1,'A 150,862 260,860 380,845 600,842 880,853 1000,866 1120,882 1200,882 C 65,612 250,604 520,605 650,611 775,622 950,643 1150,675 1350,686 1568,715 D 200,127 440,163 740,193 1200,216 1562,223');
m+=line('#f0f',1,'B 150,768 260,768 350,777 540,777 700,780 920,780 1060,770 1200,768 1440,772 E 650,617 700,614 800,612 940,614 D 200,903 380,912 600,930 800,943 1080,950 1280,963 1400,978 1500,988 1562,1002');
m+=line('#0000dd',1,'B 150,358 247,358 255,290 268,230 280,120 300,60 305,34 508,34 525,0 630,-2 645,-23 695,-23 710,-41 725,-42');
m+=line('#0000dd',1,'C 90,690 95,652 120,650 140,610 150,577 300,577 312,560 322,555 342,520 475,520 483,503 492,500 502,482 528,480 536,463 600,463 610,445 645,443 655,425 690,424 697,407 715,403 720,388 1282,388 1290,470 1302,485 1322,560 1332,625 1340,668 1355,672 1360,690');
m+=line('#0000dd',1,'D 200,108 220,110 225,127 243,128 250,205 337,206 345,225 357,241 670,241 678,262 862,262 870,298 888,298 896,355 988,355 998,412 1222,412 1228,430 1245,432 1258,487 1300,488 1305,507 1345,510 1355,545 1370,548 1392,583 1512,583 1518,638 1530,640 1562,670');
m+=line('#9c0',4,'A 460,50 520,75 600,100 625,112 660,160')+line('#9c0',4,'A 660,160 695,215 740,300 800,400 840,465 880,530 910,565 980,655 1060,740',dots)+line('#9c0',3,'A 1060,740 1150,820 1230,882');
m+=line('#9c0',4,'B 147,543 200,505 245,465')+line('#9c0',4,'B 245,465 262,440 280,400 295,350 312,290 325,240 345,178 365,110 380,60 400,5 A 412,995 425,950 440,908','stroke-linecap="round" stroke-dasharray="0.100 9" shape-rendering="auto"');
m+=line('#9c0',3,'B 1275,236 1350,215 1400,190 1440,168 C 40,930 100,875 200,805 300,738 370,705');
m+=line('#9c0',4,'C 470,285 520,287 600,330 700,378 750,400 860,485 950,545 1050,597 1110,625 1200,675 1330,745 1440,840 1500,870 D 90,310 190,355 260,395 300,445 360,510 430,580');
m+=line('#9c0',3,'D 535,798 700,790 850,772 925,768 1000,735 1100,690 1185,658')+line('#9c0',4,'D 1185,392 1240,405 1290,440 1370,500 1440,570 1500,625 1562,685');
m+=line('#993366',4,'A 645,50 700,70 780,108 900,172 1030,228 1150,285 1290,345 1440,402 C 230,215 360,262 430,293 580,345 720,393 830,430 1000,475 1150,515 1320,560 1450,610 1568,657 D 100,60 190,90 240,115 300,160 350,195 400,245 480,310 560,370 650,430 750,485 830,530 910,552');
m+=line('#993366',4,'B 147,795 200,783 250,765')+line('#993366',4,'B 250,765 290,720 320,662 355,600 380,545 415,480 460,405 490,355 530,290 580,220 635,145',dots);
m+=line('#993366',3,'D 960,797 1050,778 1130,765 1210,747')+line('#993366',3,'D 1210,390 1290,400 1350,418 1440,448 1500,475 1562,502');
m+=line('#f00',2,'B 150,205 165,203 172,187 197,185 212,165 232,120 248,105 252,0 A 265,980 268,930 280,840 293,780 300,735 355,733 365,713 412,713 420,692 460,690 470,678 490,670 497,657 510,655 520,638 675,638 678,656 1187,656 1195,735 1215,760 1218,788 1235,790 1250,850 1260,890 1268,958 1310,958 1320,978 1400,978 1405,905 1440,903');
m+=line('#f00',2,'C 0,709 18,709 22,633 165,632 205,615 475,615 480,595 553,593 565,577 580,575 590,557 728,557 745,590 757,615 950,617 955,652 975,655 982,709 1080,709 1092,780 1175,783 1185,804 1312,804 1322,838 1357,842 1362,895 1410,898 1418,915 1500,915 1508,936 D 0,335 170,336 185,352 210,390 225,410 243,412 250,485 300,486 330,512 350,555 360,562 405,562 415,582 750,582 765,618 783,620 795,638 838,638 848,657 920,657 932,620 955,600 1040,600 1048,582 1190,582 1205,560 1222,590 1228,616 1250,620 1260,638 1345,638 1352,675 1380,695 1510,695 1517,752 1562,752');
/* candles: x top bottom */
const RED={A:'268 355 535,277 240 395,281 240 535,290 248 282,298 165 355,355 395 535,159 890 962,171 890 962,180 890 930,223 848 920,237 808 886,405 735 770,417 658 770,430 658 750,443 660 808,480 892 960,500 890 960,533 694 920,541 694 745,560 735 808,574 694 770,730 962 1050,787 962 1150,800 962 1150,815 962 1000,845 962 1050,858 962 1000,868 920 962,1015 1037 1050,1028 1037 1050,1234 886 922,1295 772 882,1318 772 882,1357 694 808,1375 694 772,1412 555 694,1432 694 760',
B:'657 55 165,703 90 243,720 15 205,733 -20 130,760 55 130,770 20 165,780 15 130,803 10 130,937 15 130,960 15 130,1015 15 130,1030 15 130,1113 90 130,1072 55 205,1220 15 130,1180 130 165',
C:'43 425 540,55 425 463,213 502 612,260 388 463,120 577 652,187 620 690,350 620 690,315 577 612,570 620 805,607 620 652,643 620 652,695 690 765,840 805 840,855 880 915,883 880 915,941 765 805,990 842 880,1023 842 915,1050 842 880,1062 842 880,1190 915 955,1228 955 993,1265 955 993,1387 1070 1108,1435 1030 1108,1535 955 993',
D:'62 355 393,125 470 508,300 508 697,368 772 808,425 620 697,546 582 733,660 658 697,740 620 697,765 545 618,903 582 618,909 545 582,928 430 470,1060 395 430,1097 430 470,1292 808 848,1328 808 886,1355 922 962,1410 962 1000,1428 886 1000,1442 772 886'};
const BLUE={A:'290 165 395,305 52 315,312 52 395,322 200 395,337 240 430,346 315 430,362 315 470,370 394 583,380 394 640,388 583 770,397 735 770,425 658 770,438 658 770,452 694 850,460 810 960,472 892 960,492 892 960,517 770 962,550 694 770,567 735 770,583 694 772,590 770 850,597 808 886,608 886 997,618 890 1050,150 890 962,188 892 920,198 892 920,823 962 1110,835 962 1110,893 848 997,903 997 1050,973 997 1037,1228 997 1050,1308 772 882,1345 772 808,1423 694 808',
B:'622 -20 20,632 0 55,645 50 130,673 90 243,683 205 243,692 205 243,755 90 130,880 55 130,907 15 90,985 15 165,993 50 165,1040 55 90,1062 55 165,1050 130 165,1085 165 205,1128 55 130,1162 55 130,1175 130 165,1228 -30 90',
C:'37 425 540,48 425 500,68 502 540,85 540 577,93 540 612,108 577 652,128 577 612,136 577 652,167 612 690,221 388 463,237 312 463,248 388 577,283 540 577,322 577 612,357 620 690,368 502 690,380 652 690,415 620 690,468 652 690,482 620 690,495 620 690,508 690 730,515 690 805,528 765 840,543 727 765,552 765 805,562 727 805,575 620 765,628 652 690,635 652 765,655 727 805,730 727 765,736 765 880,755 842 915,780 842 880,850 880 915,895 805 880,922 805 880,1090 880 915,1120 915 955,1220 955 993,1255 955 993,1290 955 993,1322 993 1070,1350 1030 1070,1360 1070 1108,1428 1030 1070,1456 993 1030,1488 993 1030,1562 993 1030',
D:'17 395 430,86 395 430,112 430 508,137 470 508,167 470 508,225 508 583,236 545 583,250 620 733,257 583 733,265 583 658,275 658 733,287 620 733,310 620 697,338 583 697,345 583 772,355 772 808,388 697 772,477 658 697,485 697 733,507 697 772,556 583 658,575 697 733,630 658 697,745 658 697,800 545 583,820 620 658,991 430 470,1010 395 470,1016 395 470,1035 470 508,1052 470 508,1066 508 545,1085 545 583,1122 470 545,1147 545 583,1172 583 620,1210 697 733,1228 772 848,1253 808 848,1263 808 886,1270 808 886,1287 848 886,1380 962 1000,1398 962 1000,1415 922 1000,1486 697 962,1515 886 1110,1522 886 1035,1530 886 1035,1538 1000 1035,1556 922 962'};
function candles(set,c){let d='';for(const k in set){const z=Z[k];set[k].split(',').forEach((t,i)=>{const[x,a,b]=t.split(' ').map(Number);const X=Math.round(z[0]+x/z[2]),A=Math.round(z[1]+a/z[3]),B=Math.round(z[1]+b/z[3]);d+=i%6==4?`M${X+.5} ${A}V${B}`:`M${X-.5} ${A+.5}h2V${B+.5}h-2z`})}return `<path d="${d}" fill="none" stroke="${c}"/>`}
const ticks=(c,s)=>s.split(',').map(t=>{const[k,a,b,y]=t.split(' ');const z=Z[k];return H(Math.round(z[1]+y/z[3])+.5,c,1,z[0]+a/z[2],z[0]+b/z[2])}).join('');
m+=candles(RED,'#e8180c')+candles(BLUE,'#1458c8');
m+=ticks('#e8180c','C 0 65 424,C 145 165 577,C 600 632 690,C 690 720 727,C 800 840 805,C 1040 1085 842,C 1200 1305 955,C 1500 1510 955,C 1550 1568 955,D 30 60 355,D 265 345 697,D 355 390 772,D 510 545 733,D 600 620 697,D 640 735 658,D 765 795 545,D 820 905 582,D 935 1010 395,D 1035 1060 395,D 1275 1330 808,D 1405 1425 962,D 1442 1475 772,B 1090 1180 90,B 700 740 165,A 1375 1440 694,A 1265 1282 848');
m+=ticks('#1458c8','C 330 345 690,C 680 692 805,C 740 800 880,C 750 765 842,C 865 885 915,C 925 970 805,C 1020 1060 880,C 1093 1170 955,C 1210 1250 993,C 1335 1355 1030,C 1400 1430 1070,C 1500 1530 1030,C 1445 1490 993,D 0 110 430,D 137 210 508,D 210 260 583,D 310 350 697,D 390 405 772,D 485 500 658,D 545 610 697,D 575 610 733,D 665 755 697,D 790 860 582,D 985 1035 470,D 1095 1125 470,D 1110 1165 583,D 1215 1230 772,D 1330 1350 848,D 1370 1430 962,D 1450 1485 848,D 1490 1510 922,D 1540 1565 962,B 945 1000 130,B 1240 1250 55');
m+=line('#0f0',2,'A 147,880 200,852 245,830 265,790 285,720 305,640 330,570 350,550 365,510 385,495 430,485 455,477 530,484 590,469 700,464 780,462 930,458 1085,459 1130,466 1160,505 1175,555 1210,660 1250,750 1270,772 1310,788 1335,798 1360,790 1410,745 1440,738 C 0,500 25,470 70,467 130,452 210,435 250,405 270,390 340,378 425,378 480,392 520,402 580,427 690,435 750,475 790,500 870,506 930,512 985,580 1040,612 1080,632 1140,643 1220,677 1280,688 1320,708 1370,735 1450,775 1530,795 D 70,205 150,225 210,262 280,275 330,287 380,280 410,285 500,330 600,365 660,393 700,425 750,480 800,525 860,548 915,553 940,530 980,485 1040,430 1100,410 1140,404 1220,405 1290,390 1350,372 1430,334 1480,340 1560,354');
m+=line('#0f0',2,'B 147,447 200,415 230,390 255,383 285,395 315,435 350,437 420,375 490,310 550,255 580,235 620,228 700,238 780,258 880,255 960,278 1050,305 1110,340 1150,355 1180,348 1260,258 1335,240 1380,248 1415,266 C 25,1017 120,1017 145,1000 190,973 220,963 300,952 370,925 450,887 500,835 560,790 620,766 690,795 740,806 800,845 860,878 900,903 935,912 985,900 1080,915 1140,955 1230,990 1340,1018 1400,1055 1450,1073 1568,1088 D 100,488 130,500 200,522 240,540 300,600 340,650 400,720 470,742 550,775 620,805 700,813 750,805 800,785 860,772 915,768 960,795 1040,804 1080,780 1150,770 1210,756 1250,780 1300,810 1350,850 1420,950 1490,990 1530,1025 1562,1053');
m+=line('#f0f',5,'A 147,475 255,475 300,464 370,450 420,445 640,442 700,447 840,455 920,463 1010,482 1100,502 1210,514 1330,515 C 0,238 60,232 190,227 300,220 500,220 640,230 740,241 830,257 900,268 1000,292 1130,323 1250,335 1360,345 1450,369 1568,388 E 980,319 1020,326 1100,334 1160,337 1225,339 1280,342 1350,341 1419,340',rnd);
/* white oscillator trace */
let wl='';for(let i=0,x=130;x<1735;x+=4,i++){const r=Math.abs(Math.sin(i*12.9898)*43758.5453)%1,r2=Math.abs(Math.sin(i*4.1)*977.3)%1;const base=x<520?600:x<1100?655:x<1340?560:x<1520?470:600;wl+=`${x},${(base+(r>.75?(r2-.5)*170:r2*20)).toFixed(0)} `}
m+=line('#fff',1,wl,'stroke-dasharray="5 4"');
m+=H(341.5,'#0f0',7)+H(455.3,'#993300',3)+H(177.5,'#f00',1)+H(752.5,'#f00',1)+H(820.5,'#00f',1)+H(752.5,'#ff0',1,875,897)+H(752.5,'#ff0',1,1178,1197);
m+='<path d="M49 771.500h170v3H49" fill="#fff" stroke="#888"/><path d="M81 355l4.500-5 4.500 5h-3v4h-4v-4z" fill="#800080"/>';
m+='<path d="M1796.500 139V861" stroke="#f00"/><path d="M1827.500 139V455" stroke="#e8180c" stroke-width="3"/><path d="M1827.500 455V861" stroke="#1458c8" stroke-width="3"/>';
$('main').innerHTML=m;

/* lower panel */
let s='<path d="M89 862h30v146H89z" fill="#ffffc8"/>';
VX.forEach(x=>s+=`<path d="M${x} 862V1008" stroke="#d2d2d2" ${dash}/>`);
[883.5,914.5,945.5,976.5].forEach(y=>s+=H(y,'#d2d2d2',1,49,1829,dash));
s+=H(897,'#808080',2)+H(936.5,'#808080',1)+H(943.5,'#808080',1);
s+=area('#ccffff','F 390,452 920,450 940,462 390,464')+area('#ff0','F 205,464 215,437 290,428 380,423 392,444 480,452 600,458 700,464');
const rsi='F 120,265 145,235 200,230 208,140 225,95 240,100 255,130 262,180 290,200 300,235 320,300 350,290 380,330 420,335 440,285 470,290 500,350 540,385 565,400 590,350 610,345 650,310 690,315 730,325 780,320 820,325 870,320 910,325 960,325 1000,290 1050,255 1090,265 1150,245 1190,260 1220,300 1240,310 1300,310 1340,300 1350,265 1390,260 1400,305 1450,305 1500,340 E 523,785 560,788 600,783 650,788 690,783 720,779 740,788 790,790 820,785 850,780 880,790 905,783 935,803 950,795 980,803 1010,790 1045,780 G 40,300 90,330 150,310 170,322 210,315 265,315 275,265 330,285 410,285 440,230 500,215 510,250 540,240 580,290 610,320 630,280 690,310 730,350 770,400 800,375 870,360 920,380 970,385 985,330 1000,290 1030,340 1050,320 1075,365 1095,368 1100,310 1118,345';
function jag(o,amp,off){let r=[];for(let i=1;i<o.length;i++){const[a,b]=[o[i-1],o[i]],n=Math.max(1,Math.round((b[0]-a[0])/4));for(let k=0;k<n;k++){const t=k/n,q=Math.sin((i*31+k)*12.9898)*43758.5453;r.push([a[0]+(b[0]-a[0])*t,a[1]+(b[1]-a[1])*t+((q-Math.floor(q))-.5)*amp+off*((a[1]-940)/15)])}}return f(r)}
const R=pts(rsi);
s+=`<polyline points="${jag(R,7,0)}" fill="none" stroke="#c0c0c0"/><polyline points="${jag(R,9,3)}" fill="none" stroke="#999" stroke-dasharray="5 3"/>`;
s+=area('#f00','F 213,140 220,100 228,80 245,105 258,140')+area('#f0f','F 222,142 230,125 238,142');
s+=line('green',1,'F 120,226 145,214 205,208 220,190 250,130 270,95 300,78 320,83 340,105 370,135 400,190 435,240 470,270 495,305 530,385 555,445 575,470 590,460 640,395 670,355 700,337 730,316 780,318 820,290 850,255 880,253 920,275 940,292 985,303 1010,290 1050,240 1100,185 1150,130 1200,108 1240,130 1290,185 1340,250 1400,280 1460,293 1500,294 E 523,773 545,778 570,778 600,768 620,768 650,771 700,775 735,770 760,768 790,772 815,778 845,776 880,764 905,767 935,780 955,793 985,797 1010,795 1035,786 G 0,292 40,275 70,257 130,260 160,250 215,262 265,268 320,238 360,225 440,215 500,190 530,186 590,197 620,222 660,230 710,265 750,315 790,365 825,382 900,380 975,390 1010,345 1060,310 1118,290');
s+=line('#f00',1,'F 120,255 160,240 190,245 205,240 220,190 245,115 270,80 290,80 310,135 330,210 350,290 370,370 390,450 405,470 425,450 460,340 485,290 510,310 550,335 580,408 615,405 640,345 670,260 710,220 750,285 780,290 820,308 850,300 880,308 900,302 940,310 990,290 1020,250 1060,185 1100,158 1130,152 1160,170 1190,210 1220,280 1260,330 1305,355 1330,345 1360,270 1390,237 1430,245 1470,280 1500,325 1525,340 E 523,776 535,765 550,768 565,781 590,782 610,775 640,776 665,780 690,776 715,775 730,763 760,770 790,786 820,776 850,770 885,764 905,775 935,797 950,800 980,782 1010,768 1030,765 G 0,245 40,280 95,307 130,290 165,270 210,283 250,268 310,250 360,247 440,270 500,215 560,238 590,262 620,315 700,315 740,330 790,375 808,388 830,378 880,325 920,315 980,325 1030,270 1070,258 1095,283 1118,290');
s+=line('#0f0',2,'F 120,460 205,460 218,420 240,412 290,407 315,405 330,445 400,448 480,450 490,457 600,457 640,463');
const vol={F:'210 75,264 382,249 420,290 425,315 440,341 436,362 440,375 440,383 382,423 408,481 443,495 438,508 433,528 415,550 430,589 418,128 440,136 438,1008 436,1108 442,1155 450,1169 442,1295 408,803 455,996 455,875 455,683 458,722 455,863 457',G:'766 438,1072 355,928 445,733 457,920 455,273 460,873 460,893 460,900 460,974 457',H:'68 60,73 60,87 70,133 65,296 58,314 52,407 70,648 63,694 70,733 66,748 58,780 52,868 66,914 70,941 70,1000 66,1260 57,1280 70,1397 58,1442 55,1348 63'};
let vd='';for(const k in vol){const z=Z[k];vol[k].split(',').forEach(t=>{const[x,y]=t.split(' ').map(Number),X=Math.round(z[0]+x/z[2]);vd+=`M${X-.5} 1006V${Math.round(z[1]+y/z[3])+.5}h2V1006`})}
s+=`<path d="${vd}" fill="none" stroke="#e8180c"/><path d="M87.500 1006V901.500h2V1006M90.500 1006V996h2v10M121.500 1006v-4h2v4M128.500 1006v-4h2v4M148.500 1006v-4h2v4M173.500 1006v-5h2v5M182.500 1006v-5h2v5M214.500 1006v-7h2v7" fill="none" stroke="#1458c8"/>`;
[[938,961],[982,990],[995,1002],[1024,1040],[1172,1256],[1592,1632],[1659,1699],[1716,1737],[472,520],[530,572]].forEach(a=>s+=H(1004.5,'#0f0',1,a[0],a[1]));
s+=H(1005.5,'#808080',2)+H(1007.5,'#1458c8',1,49,1740)+H(1007.5,'#e8180c',1,49,1420,'stroke-dasharray="14 9 30 6"')+H(1007.5,'#ff0',1,1360,1520)+H(1007.5,'#0f0',1,860,890);
s+='<path d="M1796.500 862V1009" stroke="#f00"/>';
$('sub').innerHTML=s;
</script>
</body>
</html>
